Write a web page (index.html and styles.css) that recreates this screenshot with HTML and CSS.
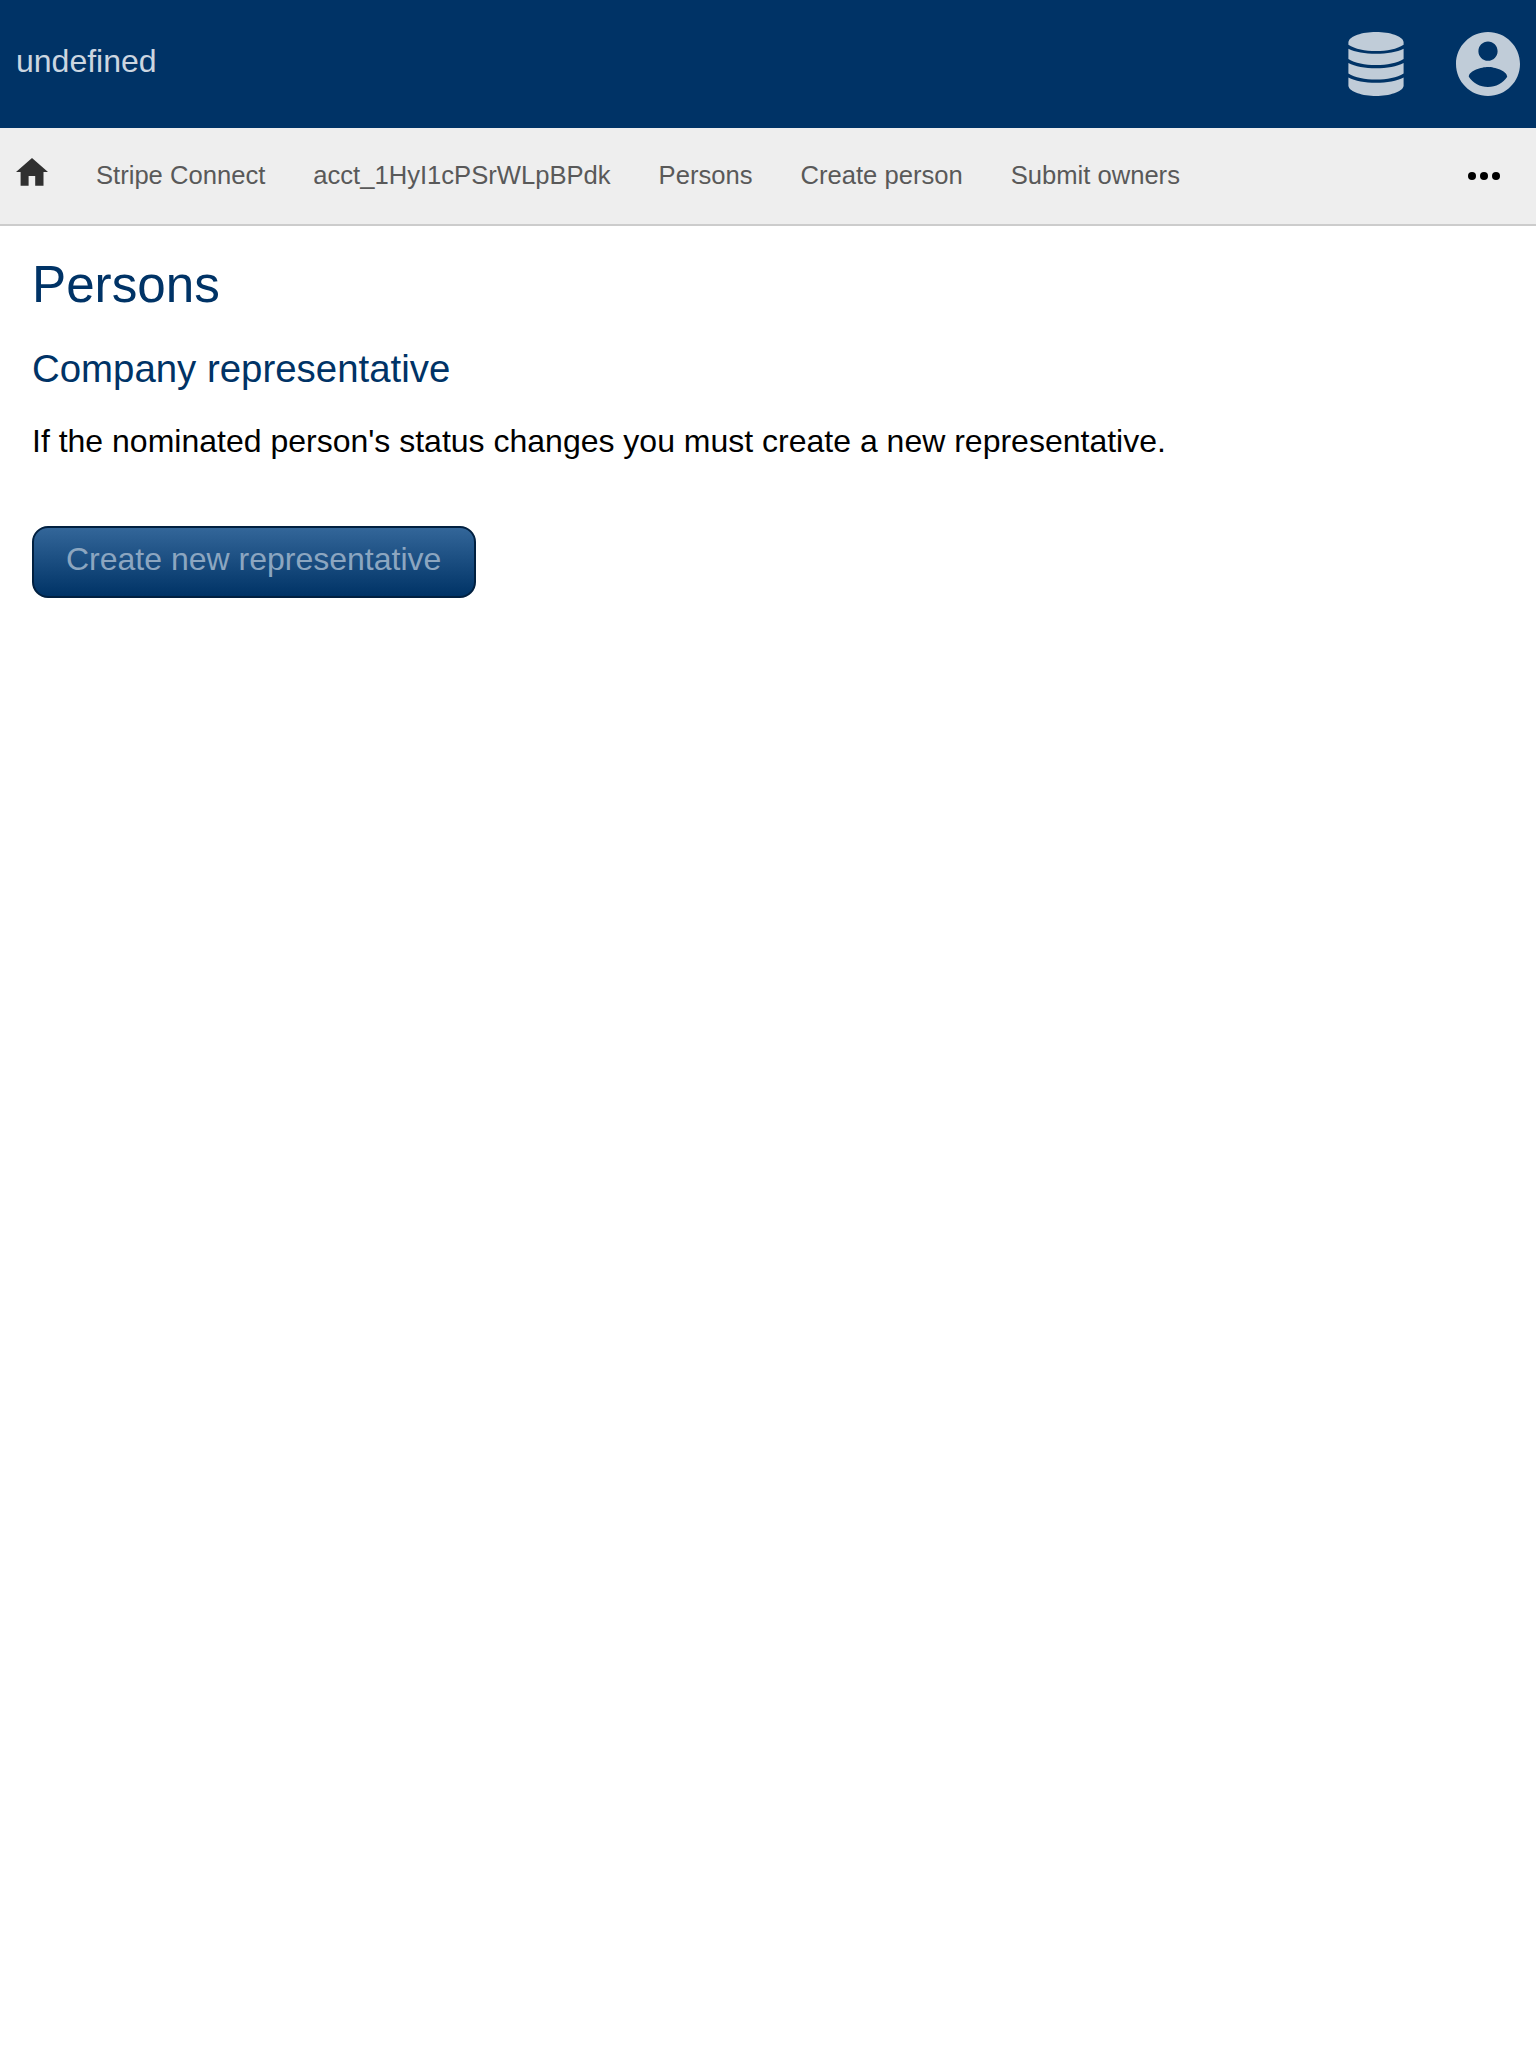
FILE: index.html
```html
<!DOCTYPE html>
<html lang="en">
<head>
<meta charset="utf-8">
<title>Persons</title>
<link rel="stylesheet" href="styles.css">
</head>
<body>
<header class="header">
  <div class="brand">undefined</div>
  <div class="menus">
    <svg class="icon-db" viewBox="0 0 56 64" aria-label="Administrator menu">
      <path d="M.4 10C1.500 4 14 0 28 0S54.500 4 55.600 10V12.700C49 17 39 19 28 19S7 17 .4 12.700Z"/>
      <path d="M.4 16.700C7 20 17 21.800 28 21.800S49 20 55.600 16.700V27C49 31 39 33 28 33S7 31 .4 27Z"/>
      <path d="M.4 31C7 34.500 17 36.300 28 36.300S49 34.500 55.600 31V41.500C49 45.500 39 47.500 28 47.500S7 45.500 .4 41.500Z"/>
      <path d="M.4 45.500C7 49 17 50.800 28 50.800S49 49 55.600 45.500V54C54.500 60 41 64 28 64S1.500 60 .4 54Z"/>
    </svg>
    <svg class="icon-account" viewBox="2 2 20 20" aria-label="Account menu">
      <path d="M12 2C6.480 2 2 6.480 2 12s4.480 10 10 10 10-4.480 10-10S17.520 2 12 2zm0 3c1.660 0 3 1.340 3 3s-1.340 3-3 3-3-1.340-3-3 1.340-3 3-3zm0 14.200c-2.500 0-4.710-1.280-6-3.220.03-1.990 4-3.080 6-3.080 1.990 0 5.970 1.090 6 3.080-1.290 1.940-3.500 3.220-6 3.220z"/>
    </svg>
  </div>
</header>
<nav class="navbar">
  <a class="home"><svg class="icon-home" viewBox="0 0 32 28" aria-label="Home"><path d="M16 0L32 14H27.500V27.700H19.200V18H12.600V27.700H4.600V14H0Z"/></svg></a>
  <a class="link">Stripe Connect</a>
  <a class="link">acct_1HyI1cPSrWLpBPdk</a>
  <a class="link">Persons</a>
  <a class="link">Create person</a>
  <a class="link">Submit owners</a>
  <svg class="icon-more" viewBox="0 0 32 8" aria-label="More"><circle cx="4" cy="4" r="4"/><circle cx="16" cy="4" r="4"/><circle cx="28" cy="4" r="4"/></svg>
</nav>
<main class="content">
  <h1>Persons</h1>
  <h2>Company representative</h2>
  <p>If the nominated person's status changes you must create a new representative.</p>
  <a class="button">Create new representative</a>
</main>
</body>
</html>
```
FILE: styles.css
```css
body {
  margin: 0;
  background: #fff;
  color: #000;
  font: 32px "Liberation Sans", Arial, sans-serif;
}
svg { display: block; }
.header {
  display: flex;
  justify-content: space-between;
  align-items: flex-start;
  box-sizing: border-box;
  height: 128px;
  padding: 32px 16px;
  background: #036;
}
.brand {
  padding-top: 9px;
  line-height: 40px;
  color: #ccd6e0;
}
.menus {
  display: flex;
  gap: 52px;
  fill: #c0ccd8;
}
.icon-db { width: 56px; height: 64px; }
.icon-account { width: 64px; height: 64px; }
.navbar {
  display: flex;
  align-items: flex-start;
  gap: 48px;
  height: 96px;
  padding: 0 36px 0 16px;
  border-bottom: 2px solid #ccc;
  background: #eee;
  font-size: 25.6px;
}
.home { padding-top: 30px; }
.icon-home { width: 32px; height: 28px; fill: #303030; }
.link {
  padding-top: 33px;
  line-height: 29px;
  color: #595959;
}
.icon-more { width: 32px; height: 8px; margin: 44px 0 0 auto; }
.content { padding: 30px 32px; }
h1, h2, p { margin: 0; font-weight: normal; }
h1 {
  margin-bottom: 33px;
  font-size: 51.2px;
  line-height: 58px;
  color: #036;
}
h2 {
  margin-bottom: 32px;
  font-size: 38.4px;
  line-height: 44px;
  color: #036;
}
p { margin-bottom: 66px; line-height: 37px; }
.button {
  display: block;
  width: max-content;
  padding: 13px 33px 19px 32px;
  border: 2px solid #012040;
  border-radius: 16px;
  background: linear-gradient(#369, #036);
  line-height: 36px;
  color: #8ca6c0;
}
```
